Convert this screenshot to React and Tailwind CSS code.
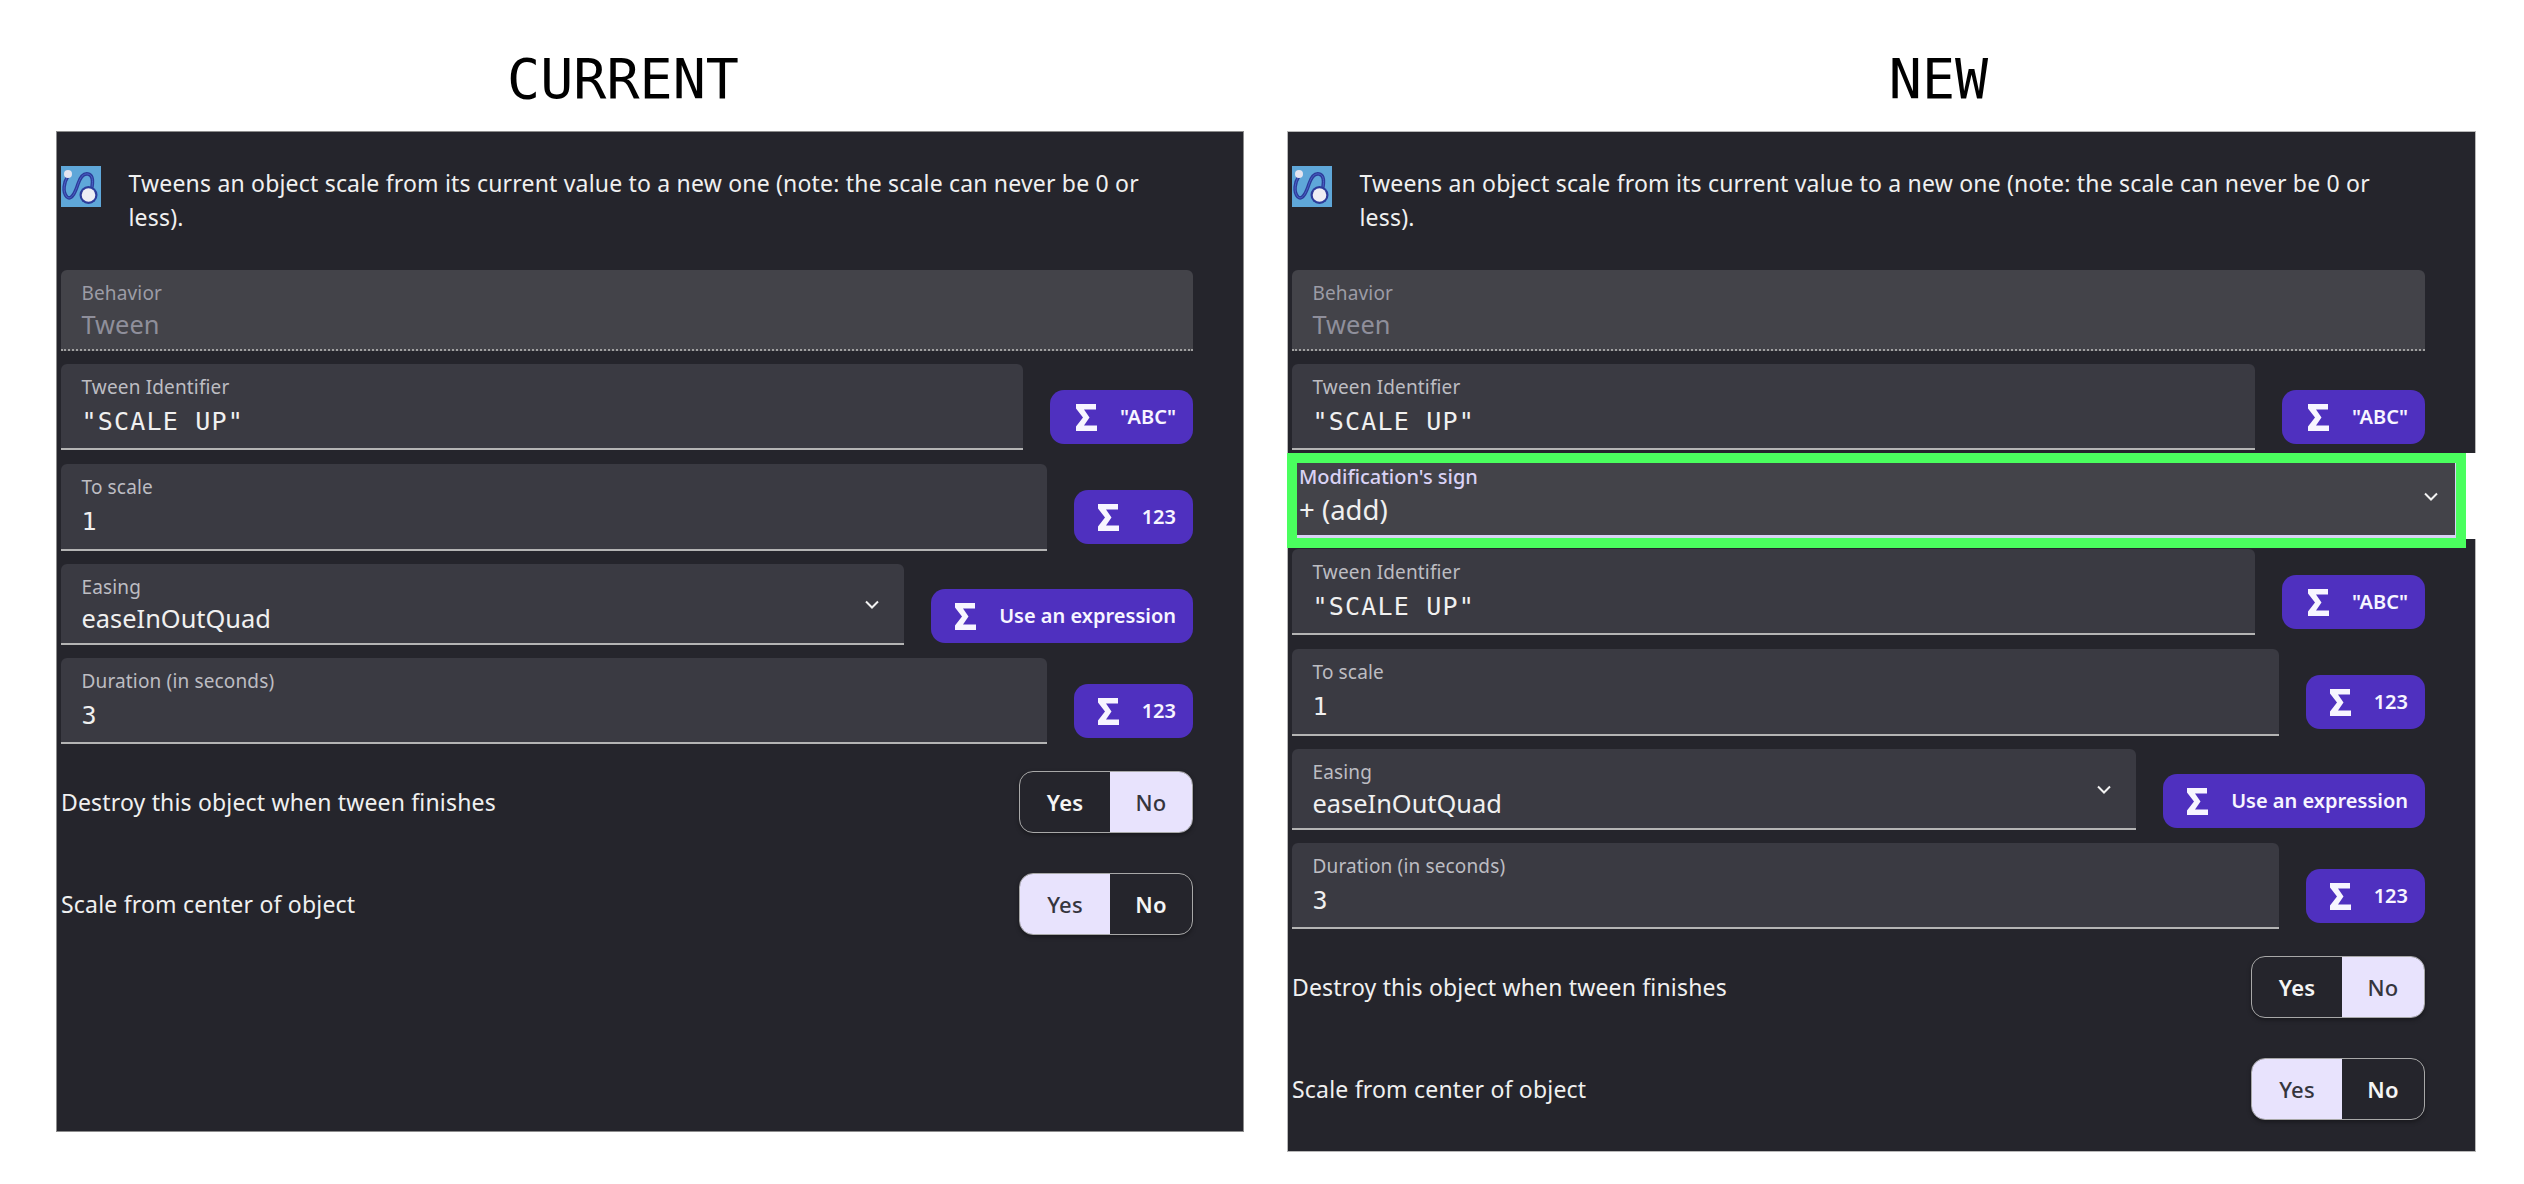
const Sigma = () => (
  <svg viewBox="0 0 21 27" className="w-[21px] h-[27px] shrink-0" fill="#f7f5ff">
    <path d="M0 0H20V5.5H8L13.5 13.5L8 21.5H21V27H0V22.5L7 13.5L0 4.5Z" />
  </svg>
);

const Chevron = () => (
  <svg viewBox="0 0 14 10" className="w-[14px] h-[10px]" fill="none" stroke="#f2f2f2" strokeWidth="2">
    <path d="M1 1.5L7 7.5L13 1.5" />
  </svg>
);

const TweenIcon = () => (
  <svg viewBox="0 0 40 41" className="w-[40px] h-[41px] shrink-0">
    <rect width="40" height="41" fill="#5fa7d9" />
    <path d="M7 10C3 16 1 26 6 31C11 35 15 24 17 18C19 12 22 7 27 8C32 9 32 15 31 21" fill="none" stroke="#2d3c9a" strokeWidth="3.5" strokeLinecap="round" />
    <path d="M7 10C3 16 1 26 6 31C11 35 15 24 17 18C19 12 22 7 27 8C32 9 32 15 31 21" fill="none" stroke="#4a62c8" strokeWidth="1" strokeLinecap="round" />
    <circle cx="7" cy="8" r="4" fill="#e4e4f0" />
    <circle cx="27.5" cy="29" r="9" fill="#2d3c9a" />
    <circle cx="27.5" cy="29" r="6.8" fill="#eeeef4" />
  </svg>
);

const Field = ({ label, value, mono, disabled, select, className = "" }) => (
  <div
    className={`relative rounded-t-[6px] border-b-2 pl-[20.5px] ${disabled ? "bg-[#434349] border-b border-dotted border-[#a0a0a0]" : "bg-[#3a3a42] border-[#b4b4b4]"} ${className}`}
  >
    <div className={`pt-[11px] text-[19px] leading-[24px] tracking-[0.15px] ${disabled ? "text-[#9c9ca6]" : "text-[#bdbdc2]"}`}>{label}</div>
    <div
      className={
        mono
          ? "pt-[8px] font-['DejaVu_Sans_Mono',monospace] text-[25px] leading-[30px] tracking-[1.2px] text-[#f0f0f0]"
          : `pt-[3px] text-[25.4px] leading-[32px] ${disabled ? "text-[#8f8f9b]" : "text-[#f0f0f0]"}`
      }
    >
      {value}
    </div>
    {select && (
      <div className="absolute right-[25px] top-[36px]">
        <Chevron />
      </div>
    )}
  </div>
);

const ExprButton = ({ text, widthClass, mt = "mt-[26px]" }) => (
  <div className={`ml-[27px] h-[54px] ${mt} ${widthClass} shrink-0 rounded-[14px] bg-[#4f30bf] flex items-center justify-end pr-[17px] gap-[23px] text-[#f7f5ff] font-semibold text-[20px]`}>
    <Sigma />
    <span>{text}</span>
  </div>
);

const Toggle = ({ active }) => (
  <div className="w-[174px] h-[62px] flex rounded-[14px] border border-[#a8a8a8] shadow-[0_2px_4px_rgba(0,0,0,0.35)] text-[22px] overflow-hidden">
    <div className={`w-[90px] flex items-center justify-center ${active === "yes" ? "bg-[#e8e3fd] text-[#35353d] font-medium" : "text-[#f5f5f5] font-semibold"}`}>Yes</div>
    <div className={`flex-1 flex items-center justify-center ${active === "no" ? "bg-[#e8e3fd] text-[#35353d] font-medium" : "text-[#f5f5f5] font-semibold"}`}>No</div>
  </div>
);

const Header = () => (
  <>
    <div className="flex items-start pl-[4px] pt-[34px] h-[138px]">
      <TweenIcon />
      <p className="ml-[27.5px] w-[1060px] text-[23px] leading-[34px] tracking-[0.19px] text-[#f0f0f0]">
        Tweens an object scale from its current value to a new one (note: the scale can never be 0 or less).
      </p>
    </div>
    <div className="pl-[4px] pr-[50px]">
      <Field label="Behavior" value="Tween" disabled className="h-[81px]" />
    </div>
  </>
);

const TweenId = ({ top = "mt-[13px]" }) => (
  <div className={`flex items-start pl-[4px] pr-[50px] ${top}`}>
    <Field label="Tween Identifier" value={'"SCALE UP"'} mono className="flex-1 h-[86px]" />
    <ExprButton text={'"ABC"'} widthClass="w-[143px]" />
  </div>
);

const Rest = () => (
  <>
    <div className="flex items-start pl-[4px] pr-[50px] mt-[14px]">
      <Field label="To scale" value="1" mono className="flex-1 h-[87px]" />
      <ExprButton text="123" widthClass="w-[119px]" />
    </div>
    <div className="flex items-start pl-[4px] pr-[50px] mt-[13px]">
      <Field label="Easing" value="easeInOutQuad" select className="flex-1 h-[81px]" />
      <ExprButton text="Use an expression" widthClass="w-[262px]" mt="mt-[25px]" />
    </div>
    <div className="flex items-start pl-[4px] pr-[50px] mt-[13px]">
      <Field label="Duration (in seconds)" value="3" mono className="flex-1 h-[86px]" />
      <ExprButton text="123" widthClass="w-[119px]" />
    </div>
    <div className="flex items-center justify-between pl-[4px] pr-[50px] mt-[27px] text-[23px] tracking-[0.17px] text-[#f0f0f0]">
      <span>Destroy this object when tween finishes</span>
      <Toggle active="no" />
    </div>
    <div className="flex items-center justify-between pl-[4px] pr-[50px] mt-[40px] text-[23px] tracking-[0.2px] text-[#f0f0f0]">
      <span>Scale from center of object</span>
      <Toggle active="yes" />
    </div>
  </>
);

const Title = ({ children, className }) => (
  <div className={`h-[132px] pt-[45px] text-center font-['DejaVu_Sans_Mono',monospace] text-[55px] leading-[68px] text-black font-extralight ${className}`}>
    {children}
  </div>
);

export default function App() {
  return (
    <div className="w-[2524px] h-[1184px] bg-white flex font-['Noto_Sans',sans-serif] overflow-hidden">
      <div className="ml-[56px] w-[1188px] shrink-0">
        <Title className="pr-[54px]">CURRENT</Title>
        <div className="h-[1001px] bg-[#25252c] border border-[#8c8c8c] -mt-px">
          <Header />
          <TweenId />
          <Rest />
        </div>
      </div>
      <div className="ml-[43px] w-[1189px] shrink-0">
        <Title className="pl-[114px]">NEW</Title>
        <div className="h-[322px] bg-[#25252c] border-x border-t border-[#b8b8b8] -mt-px">
          <Header />
          <TweenId />
        </div>
        <div className="relative z-10 w-[1179px] h-[95px] -mb-[9px] border-[10px] border-[#4aff5e]">
          <div className="h-full bg-[#434349] border-b-[3px] border-r border-[#d9d2f5] pl-[2px]">
            <div className="pt-[2px] text-[20px] leading-[24px] font-medium text-[#d9d2f5]">Modification's sign</div>
            <div className="pt-[5px] text-[27.5px] leading-[32px] text-[#f0f0f0]">+ (add)</div>
            <div className="absolute right-[18px] top-[29px]">
              <Chevron />
            </div>
          </div>
        </div>
        <div className="h-[613px] pt-[10px] bg-[#25252c] border-x border-b border-[#b8b8b8]">
          <TweenId top="" />
          <Rest />
        </div>
      </div>
    </div>
  );
}
